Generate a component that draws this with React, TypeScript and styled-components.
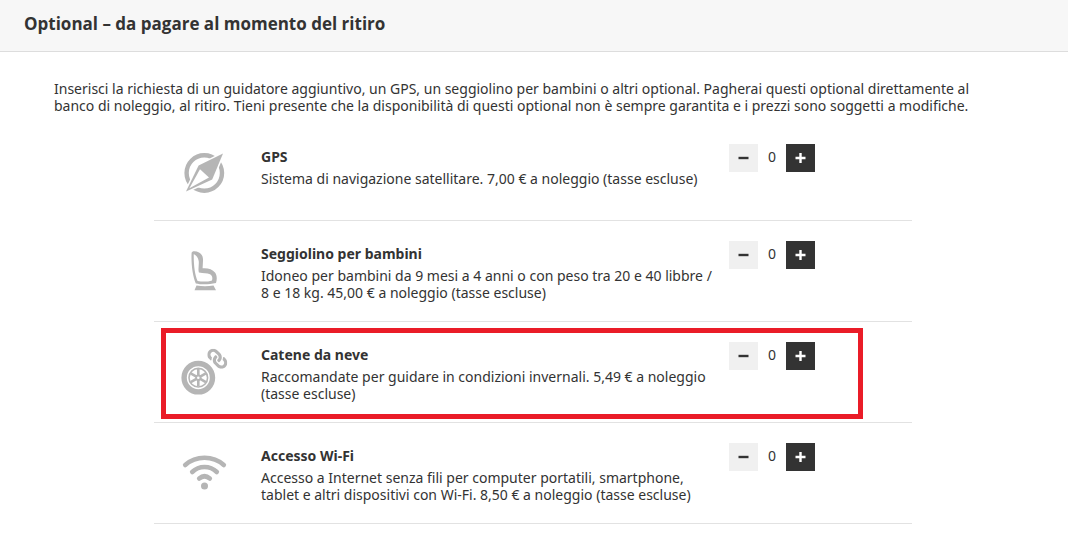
import React, { useState } from "react";
import styled, { createGlobalStyle } from "styled-components";
import { FaLink } from "react-icons/fa";

const GlobalStyle = createGlobalStyle`
  * { box-sizing: border-box; }
  body {
    margin: 0;
    background: #fff;
    color: #333;
    font-family: "Noto Sans", "Open Sans", sans-serif;
    font-size: 14px;
    line-height: 17px;
  }
`;

const Header = styled.header`
  padding: 12px 24px 15px;
  background: #f7f7f7;
  border-bottom: 1px solid #ddd;
`;

const Heading = styled.h2`
  margin: 0;
  font-family: "Open Sans", sans-serif;
  font-size: 17px;
  line-height: 24px;
  font-weight: 700;
`;

const Content = styled.main`
  padding: 28px 56px 24px 54px;
`;

const Intro = styled.p`
  margin: 0 0 10px;
  padding-right: 32px;
`;

const List = styled.ul`
  list-style: none;
  margin: 0 100px;
  padding: 0;
`;

const Row = styled.li`
  position: relative;
  display: flex;
  align-items: flex-start;
  padding: 20px 0;
  border-bottom: 1px solid #e2e2e2;
`;

const Highlight = styled.div`
  position: absolute;
  inset: 6px 49px 3px 7px;
  border: 5px solid #ea1c28;
  pointer-events: none;
`;

const IconCell = styled.div`
  flex: 0 0 107px;
  padding-left: 22px;
  color: #b5b5b5;

  svg { display: block; }
`;

const Info = styled.div`
  flex: 1;
  min-width: 0;
  padding-right: 10px;
`;

const Name = styled.h3`
  margin: 0;
  font-size: 14px;
  line-height: 26px;
  font-weight: 700;
`;

const Description = styled.p`
  margin: 0;
`;

const Stepper = styled.div`
  flex: 0 0 183px;
  display: flex;
  align-items: flex-start;
`;

const StepButton = styled.button<{ $dark?: boolean }>`
  display: flex;
  align-items: center;
  justify-content: center;
  width: 29px;
  height: 28px;
  padding: 0;
  border: 0;
  cursor: pointer;
  background: ${(p) => (p.$dark ? "#333" : "#f0f0f0")};
  color: ${(p) => (p.$dark ? "#fff" : "#333")};
`;

const Count = styled.output`
  width: 28px;
  line-height: 26px;
  text-align: center;
`;

const CompassIcon = () => (
  <svg width="56" height="56" viewBox="0 0 56 56" aria-hidden="true">
    <circle cx="28.3" cy="29" r="17.7" fill="none" stroke="currentColor" strokeWidth="4.4" />
    <path d="M47 9.6 L22.6 21.6 L10 47.4 L36.2 35.6 Z" fill="#fff" stroke="#fff" strokeWidth="3" />
    <path d="M47 9.6 L22.6 21.6 L10 47.4 L36.2 35.6 Z" fill="currentColor" />
    <path d="M24 25.2 L33 33.6 L13.4 44.2 Z" fill="#fff" />
  </svg>
);

const SeatIcon = () => (
  <svg width="56" height="56" viewBox="0 0 56 56" aria-hidden="true">
    <path
      fill="currentColor"
      fillRule="evenodd"
      d="M15.600 12 C15.600 9.600 20 9.800 23 11.400 C26 13.200 27.300 16 27 20 L26.600 27.200 C32 26.800 36.500 28.200 39 31.500 C41.300 34.500 41 39 40 42 C33 43.600 25 43.600 19.800 42.400 C16.400 35 15 21 15.600 12 Z M17.800 13 C17.500 22 18.500 33 21.600 40 C27 41 32 40.700 36 39.400 C36.800 36.500 36.200 34.500 34 33.200 C31 31.800 27.500 32.600 22.900 31.400 C21.800 28 23.200 24 22.700 20 C22.300 16.800 20.300 14.500 17.800 13 Z"
    />
    <path fill="currentColor" d="M20.500 44.500 Q29 46 37.500 44.500 L40 49.200 H18.500 Z" />
  </svg>
);

const WheelIcon = () => (
  <svg width="56" height="56" viewBox="0 0 56 56" aria-hidden="true" fill="none" stroke="currentColor">
    <circle cx="22.3" cy="35.7" r="14.2" strokeWidth="5.4" />
    <circle cx="22.3" cy="35.7" r="9.3" strokeWidth="1.600" />
    {[0, 60, 120, 180, 240, 300].map((angle) => (
      <path key={angle} d="M22.300 33.500 V27" strokeWidth="2.600" transform={`rotate(${angle} 22.300 35.700)`} />
    ))}
    <circle cx="22.3" cy="35.7" r="2.2" strokeWidth="1.800" />
    <g transform="translate(51.300 6.700) scale(-1 1)">
      <FaLink size={20} />
    </g>
  </svg>
);

const WifiIcon = () => (
  <svg width="56" height="56" viewBox="0 0 56 56" aria-hidden="true" fill="none" stroke="currentColor" strokeWidth="4.600" strokeLinecap="round">
    <path d="M9.200 22 C20 12.400 37 12.400 47.800 22" />
    <path d="M16.200 29 C23 22.400 34 22.400 40.800 29" />
    <path d="M23.200 35.500 C26.500 32.700 30.500 32.700 33.800 35.500" />
    <circle cx="28.5" cy="43" r="3.500" fill="currentColor" stroke="none" />
  </svg>
);

const MinusSign = () => (
  <svg width="11" height="10" viewBox="0 0 11 10" aria-hidden="true">
    <path d="M0.500 5 H10.500" stroke="currentColor" strokeWidth="2.400" />
  </svg>
);

const PlusSign = () => (
  <svg width="11" height="10" viewBox="0 0 11 10" aria-hidden="true">
    <path d="M0.500 5 H10.500 M5.500 0 V10" stroke="currentColor" strokeWidth="2.400" />
  </svg>
);

interface Extra {
  name: string;
  description: string;
  Icon: React.FC;
  highlighted?: boolean;
}

const extras: Extra[] = [
  {
    name: "GPS",
    description: "Sistema di navigazione satellitare. 7,00 € a noleggio (tasse escluse)",
    Icon: CompassIcon,
  },
  {
    name: "Seggiolino per bambini",
    description:
      "Idoneo per bambini da 9 mesi a 4 anni o con peso tra 20 e 40 libbre / 8 e 18 kg. 45,00 € a noleggio (tasse escluse)",
    Icon: SeatIcon,
  },
  {
    name: "Catene da neve",
    description: "Raccomandate per guidare in condizioni invernali. 5,49 € a noleggio (tasse escluse)",
    Icon: WheelIcon,
    highlighted: true,
  },
  {
    name: "Accesso Wi-Fi",
    description:
      "Accesso a Internet senza fili per computer portatili, smartphone, tablet e altri dispositivi con Wi-Fi. 8,50 € a noleggio (tasse escluse)",
    Icon: WifiIcon,
  },
];

const ExtraRow = ({ name, description, Icon, highlighted }: Extra) => {
  const [count, setCount] = useState(0);
  return (
    <Row>
      <IconCell>
        <Icon />
      </IconCell>
      <Info>
        <Name>{name}</Name>
        <Description>{description}</Description>
      </Info>
      <Stepper role="group" aria-label={name}>
        <StepButton type="button" aria-label="Diminuisci" onClick={() => setCount(Math.max(0, count - 1))}>
          <MinusSign />
        </StepButton>
        <Count>{count}</Count>
        <StepButton type="button" $dark aria-label="Aumenta" onClick={() => setCount(count + 1)}>
          <PlusSign />
        </StepButton>
      </Stepper>
      {highlighted && <Highlight />}
    </Row>
  );
};

export default function App() {
  return (
    <>
      <GlobalStyle />
      <Header>
        <Heading>Optional – da pagare al momento del ritiro</Heading>
      </Header>
      <Content>
        <Intro>
          Inserisci la richiesta di un guidatore aggiuntivo, un GPS, un seggiolino per bambini o altri optional.
          Pagherai questi optional direttamente al banco di noleggio, al ritiro. Tieni presente che la disponibilità
          di questi optional non è sempre garantita e i prezzi sono soggetti a modifiche.
        </Intro>
        <List>
          {extras.map((extra) => (
            <ExtraRow key={extra.name} {...extra} />
          ))}
        </List>
      </Content>
    </>
  );
}
